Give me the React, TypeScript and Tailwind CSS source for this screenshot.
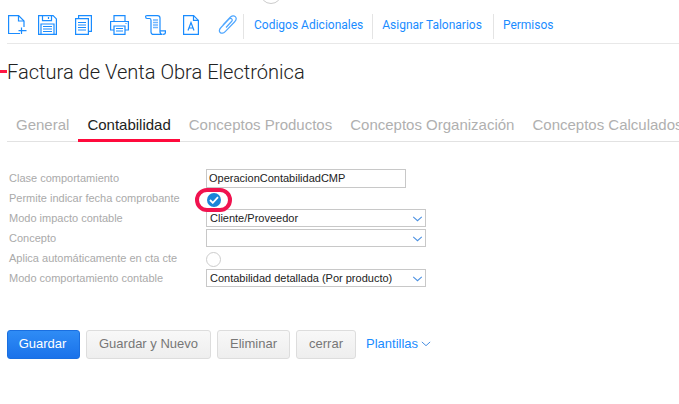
import React from 'react';

const BLUE = '#1a8cff';

const NewIcon = () => (
  <svg width="20" height="20" viewBox="0 0 20 20" fill="none" stroke={BLUE} strokeWidth="1.2">
    <path d="M12 18.500H.6V.6h10l5.400 5.400V12" />
    <path d="M10.500.6v5.400h5.500" />
    <path d="M13.500 12.500v6.500M10.500 15.700h8" />
  </svg>
);
const SaveIcon = () => (
  <svg width="19" height="20" viewBox="0 0 19 20" fill="none" stroke={BLUE} strokeWidth="1.200">
    <path d="M.6.6h14.500l3.300 3.300v15.500H.6z" />
    <path d="M4.500.6v5h9v-5" />
    <path d="M10.500 2v2" />
    <path d="M3 19.400V9h13v10.400" />
    <path d="M5 11.500h9M5 14h9M5 16.500h9" />
  </svg>
);
const CopyIcon = () => (
  <svg width="17" height="20" viewBox="0 0 17 20" fill="none" stroke={BLUE} strokeWidth="1.200">
    <path d="M.6 3.600h12.800v15.800H.6z" />
    <path d="M3.600 3.600V.6h12.800v15.800h-3" />
    <path d="M3 7.500h8M3 10h8M3 12.500h8M3 15h8" />
  </svg>
);
const PrintIcon = () => (
  <svg width="19" height="20" viewBox="0 0 19 20" fill="none" stroke={BLUE} strokeWidth="1.200">
    <path d="M4 6.500V.6h11v5.900" />
    <path d="M4 15H.6V6.500h17.800V15H15" />
    <path d="M4 11h11v8.400H4z" />
    <path d="M6 13.500h7M6 16h7" />
    <path d="M15.500 8.500h1" />
  </svg>
);
const ScrollIcon = () => (
  <svg width="21" height="20" viewBox="0 0 21 20" fill="none" stroke={BLUE} strokeWidth="1.200">
    <path d="M.6 1.500C.6.800 1.500.6 2.500.6h10c1.500 0 2.500 1 2.500 2.500v13.500c0 1.500 1 2.800 2.500 2.800H8.500c-1.500 0-2.500-1-2.500-2.500V5.300C6 4 5.500 3.500 4.500 3.500H2C1 3.500.6 2.500.6 1.500z" />
    <path d="M15 15.800h5.400v1.700c0 1-1 1.900-2.500 1.900" />
    <path d="M8 5h5M8 7.500h5M8 10h5M8 12.500h5" stroke="#6db5ff" strokeWidth="1.600" />
  </svg>
);
const DocAIcon = () => (
  <svg width="16" height="20" viewBox="0 0 16 20" fill="none" stroke={BLUE} strokeWidth="1.200">
    <path d="M.6.6h10l4.800 4.800v14H.6z" />
    <path d="M10.500.6v4.800h4.900" />
    <path d="M5 15.500l3-8 3 8M6 13h4" />
  </svg>
);
const ClipIcon = () => (
  <svg width="19" height="20" viewBox="0 0 19 20" fill="none" stroke="#4ea6ff" strokeWidth="1.200">
    <path d="M8 12.500l5.500-6c.9-1 .9-2 .2-2.700-.7-.7-1.800-.6-2.700.3L3 12.500c-1.700 1.800-2 3.800-.8 5 1.200 1.200 3.200.9 5-.9L16.500 7c1.900-2 2.100-4 .8-5.300C16 .4 13.800.6 12 2.500L5 10" />
  </svg>
);

const Chevron = ({ className = '' }: { className?: string }) => (
  <svg width="11" height="6" viewBox="0 0 12 7" fill="none" stroke="#4a90e2" strokeWidth="1.200" className={className}>
    <path d="M1 1l5 4.500L11 1" />
  </svg>
);

const Row: React.FC<{ label: string; children: React.ReactNode }> = ({ label, children }) => (
  <div className="flex h-5 items-start">
    <span className="w-[197px] pt-[2px] text-[11px] leading-[14px] text-[#aaaaaa]">{label}</span>
    {children}
  </div>
);

const SelectBox: React.FC<{ value?: string }> = ({ value = '' }) => (
  <div className="flex h-[18px] w-[220px] items-center justify-between border border-[#c8c8c8] pl-[3px] pr-[2px] text-[11px] text-[#222222]">
    <span>{value}</span>
    <Chevron className="mt-[2px]" />
  </div>
);

const GrayButton: React.FC<{ label: string; width: string }> = ({ label, width }) => (
  <button className={`h-[29px] ${width} rounded-[3px] border border-[#dddddd] bg-gradient-to-b from-[#f8f8f8] to-[#eeeeee] pb-[2px] text-[13px] text-[#777777]`}>
    {label}
  </button>
);

export default function App() {
  return (
    <div className="relative h-[404px] w-[679px] overflow-hidden bg-white font-['Liberation_Sans',sans-serif]">
      <div className="absolute left-[260px] top-[-18px] h-[22px] w-[22px] rounded-full border border-[#cccccc]" />

      {/* toolbar */}
      <div className="ml-[7px] flex h-[44px] items-start border-b border-[#e8e8e8] pt-[14px]">
        <div className="flex items-center pl-[1px] pt-[1px]">
          <div className="w-[30px]"><NewIcon /></div>
          <div className="w-[37px]"><SaveIcon /></div>
          <div className="w-[35px]"><CopyIcon /></div>
          <div className="w-[35px]"><PrintIcon /></div>
          <div className="w-[38px]"><ScrollIcon /></div>
          <div className="w-[35px]"><DocAIcon /></div>
          <div className="w-[25px]"><ClipIcon /></div>
        </div>
        <div className="flex h-[25px] items-center border-l border-[#e4e4e4] pb-[3px] pl-[10px] pr-[9px] font-['Roboto',sans-serif] text-[12px] text-[#1a8cff]">
          Codigos Adicionales
        </div>
        <div className="flex h-[25px] items-center border-l border-[#e4e4e4] pb-[3px] pl-[9px] pr-[11px] font-['Roboto',sans-serif] text-[12px] text-[#1a8cff]">
          Asignar Talonarios
        </div>
        <div className="flex h-[25px] items-center border-l border-[#e4e4e4] pb-[3px] pl-[9px] font-['Roboto',sans-serif] text-[12px] text-[#1a8cff]">
          Permisos
        </div>
      </div>

      {/* title */}
      <div className="relative mt-[14px] h-[28px] pl-[7px] font-['Roboto',sans-serif] text-[20.07px] font-light leading-[28px] text-[#222222]">
        <div className="absolute left-0 top-[12px] h-[3px] w-[7px] bg-[#ff1744]" />
        Factura de Venta Obra Electrónica
      </div>

      {/* tabs */}
      <div className="ml-[7px] mt-[26px] flex h-[30px] whitespace-nowrap border-b border-[#e2e2e2] text-[15px] text-[#b0b0b0]">
        <div className="px-[9px] pt-[2px]">General</div>
        <div className="h-[30px] border-b-[3px] border-[#ff0a3c] px-[9px] pt-[2px] text-[#222222]">Contabilidad</div>
        <div className="px-[9px] pt-[2px]">Conceptos Productos</div>
        <div className="px-[9px] pt-[2px]">Conceptos Organización</div>
        <div className="px-[9px] pt-[2px]">Conceptos Calculados</div>
      </div>

      {/* form */}
      <div className="ml-[9px] mt-[27px]">
        <Row label="Clase comportamiento">
          <div className="flex h-[19px] w-[200px] items-center border border-[#c8c8c8] pl-[2px] text-[11px] text-[#222222]">
            OperacionContabilidadCMP
          </div>
        </Row>
        <Row label="Permite indicar fecha comprobante">
          <div className="relative h-5 w-5">
            <div className="absolute left-[-11px] top-[-1px] h-[24px] w-[37px] rounded-full border-[4px] border-[#f0134f]" />
            <div className="absolute left-[1px] top-[4px] flex h-[14px] w-[14px] items-center justify-center rounded-full bg-[#1b84d8]">
              <svg width="10" height="8" viewBox="0 0 10 8" fill="none" stroke="white" strokeWidth="1.800">
                <path d="M1 4l2.800 2.800L9 1.200" />
              </svg>
            </div>
          </div>
        </Row>
        <Row label="Modo impacto contable">
          <SelectBox value="Cliente/Proveedor" />
        </Row>
        <Row label="Concepto">
          <SelectBox />
        </Row>
        <Row label="Aplica automáticamente en cta cte">
          <div className="mt-[3px] h-[15px] w-[15px] rounded-full border border-[#cccccc]" />
        </Row>
        <Row label="Modo comportamiento contable">
          <SelectBox value="Contabilidad detallada (Por producto)" />
        </Row>
      </div>

      {/* actions */}
      <div className="ml-[7px] mt-[41px] flex items-center gap-[6px]">
        <button className="h-[29px] w-[73px] rounded-[3px] border border-[#1a6fe0] bg-gradient-to-b from-[#2f8cf5] to-[#1a72ea] pb-[2px] pr-[2px] text-[13px] text-white">
          Guardar
        </button>
        <GrayButton label="Guardar y Nuevo" width="w-[125px]" />
        <GrayButton label="Eliminar" width="w-[73px]" />
        <GrayButton label="cerrar" width="w-[60px]" />
        <div className="ml-[4px] flex items-center gap-[3px] pb-[2px] text-[13px] text-[#1a8cff]">
          Plantillas
          <Chevron className="mt-[1px] w-[10px]" />
        </div>
      </div>
    </div>
  );
}
